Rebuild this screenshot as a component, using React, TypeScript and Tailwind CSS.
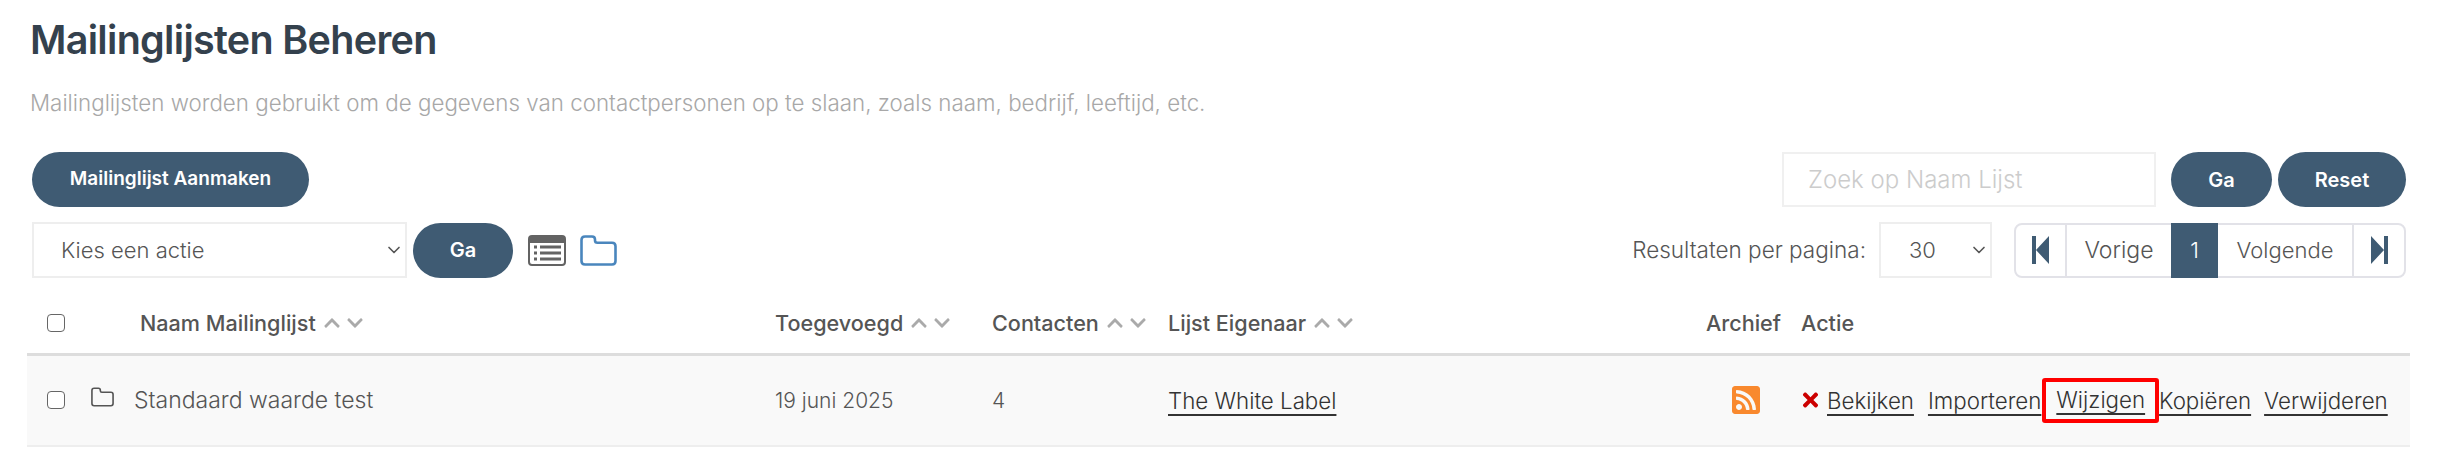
import React from "react";
import { ChevronDown } from "lucide-react";
import { FaChevronDown, FaChevronUp, FaRssSquare, FaTimes } from "react-icons/fa";

const Pill = ({ label, className }: { label: string; className: string }) => (
  <button
    type="button"
    className={`h-[55px] rounded-[28px] bg-[#3f5b73] font-semibold text-white ${className}`}
  >
    {label}
  </button>
);

const Folder = ({ className }: { className: string }) => (
  <svg viewBox="0 0 37 31" fill="none" stroke="currentColor" strokeWidth="2.6" className={className}>
    <path d="M1.5 5C1.5 2.8 2.8 1.5 5 1.5H12C14 1.5 15 2.6 15 4.5V5.5C15 7 16 7.8 17.5 7.8H32C34.2 7.8 35.5 9.2 35.5 11.3V26C35.5 28.2 34.2 29.5 32 29.5H5C2.8 29.5 1.5 28.2 1.5 26Z" />
  </svg>
);

const SortArrows = () => (
  <span className="ml-[7px] inline-flex items-center gap-[5px] text-[#aaaaaa]">
    <FaChevronUp className="h-[18px] w-[18px]" />
    <FaChevronDown className="h-[18px] w-[18px]" />
  </span>
);

const Check = () => (
  <input
    type="checkbox"
    className="block h-[18px] w-[18px] appearance-none rounded-[4px] border-[1.5px] border-[#666666] bg-white"
  />
);

const ActionLink = ({ label, className }: { label: string; className?: string }) => (
  <a href="#" className={`text-[22.3px] text-[#333333] underline decoration-2 underline-offset-[5px] ${className ?? ""}`}>
    {label}
  </a>
);

const SelectBox = ({ label, className, selectClass }: { label: string; className: string; selectClass: string }) => (
  <div className={`relative ${className}`}>
    <select className={`h-[56px] w-full appearance-none border-2 border-[#eeeeee] bg-white text-[22px] text-[#555555] ${selectClass}`}>
      <option>{label}</option>
    </select>
    <ChevronDown className="pointer-events-none absolute top-[18px] right-[3px] h-[20px] w-[20px] text-[#555555]" />
  </div>
);

export default function App() {
  return (
    <div className="h-[462px] w-[2446px] bg-white pl-[27px] pr-[36px] font-['Inter','Liberation_Sans',sans-serif] font-light text-[#555555]">
      <div className="px-[3px]">
        <h1 className="h-[80px] text-[39.5px] leading-[80px] font-semibold tracking-[-0.7px] text-[#34414d]">
          Mailinglijsten Beheren
        </h1>
        <p className="h-[46px] text-[22.35px] leading-[46px] text-[#a8a8a8]">
          Mailinglijsten worden gebruikt om de gegevens van contactpersonen op te slaan, zoals naam, bedrijf, leeftijd, etc.
        </p>
      </div>

      <div className="mt-[26px] flex items-center justify-between pl-[5px] pr-[4px]">
        <Pill label="Mailinglijst Aanmaken" className="w-[277px] text-[19px]" />
        <div className="flex items-center gap-[15px]">
          <input
            placeholder="Zoek op Naam Lijst"
            className="h-[55px] w-[374px] border-2 border-[#f0f0f0] px-[24px] text-[24px] placeholder:text-[#cccccc]"
          />
          <div className="flex gap-[6px]">
            <Pill label="Ga" className="w-[101px] text-[20px]" />
            <Pill label="Reset" className="w-[128px] text-[20px]" />
          </div>
        </div>
      </div>

      <div className="mt-[15px] flex items-center justify-between pl-[5px] pr-[4px]">
        <div className="flex items-center">
          <SelectBox label="Kies een actie" className="w-[375px]" selectClass="pl-[27px]" />
          <Pill label="Ga" className="ml-[6px] w-[100px] text-[20px]" />
          <svg viewBox="0 0 38 31" className="ml-[15px] h-[31px] w-[38px] text-[#636363]" fill="none">
            <rect x="1" y="1" width="36" height="29" rx="3" fill="#ffffff" stroke="currentColor" strokeWidth="2" />
            <path d="M3 1H35C36 1 37 2 37 3V8H1V3C1 2 2 1 3 1Z" fill="currentColor" />
            <path d="M6 12H9M12 12H33M6 18H9M12 18H33M6 24H9M12 24H33" stroke="currentColor" strokeWidth="3" />
          </svg>
          <Folder className="ml-[14px] h-[31px] w-[37px] text-[#4a86bd]" />
        </div>

        <div className="flex items-center">
          <span className="text-[22.5px]">Resultaten per pagina:</span>
          <SelectBox label="30" className="ml-[13px] w-[113px]" selectClass="pl-[28px]" />
          <nav className="ml-[22px] flex h-[55px] items-stretch text-[22px]">
            <span className="flex w-[53px] items-center justify-center rounded-l-[8px] border-2 border-[#e2e2e8]">
              <svg viewBox="0 0 17 28" className="h-[28px] w-[17px] text-[#3f5b73]" fill="currentColor">
                <path d="M0 0H4V28H0ZM17 0V28L4 14Z" />
              </svg>
            </span>
            <span className="flex w-[104px] items-center justify-center border-y-2 border-[#e2e2e8] text-[23px]">Vorige</span>
            <span className="flex w-[47px] items-center justify-center bg-[#3f5b73] text-white">1</span>
            <span className="flex w-[134px] items-center justify-center border-y-2 border-[#e2e2e8]">Volgende</span>
            <span className="flex w-[54px] items-center justify-center rounded-r-[8px] border-2 border-[#e2e2e8]">
              <svg viewBox="0 0 17 28" className="h-[28px] w-[17px] text-[#3f5b73]" fill="currentColor">
                <path d="M0 0V28L13 14ZM13 0H17V28H13Z" />
              </svg>
            </span>
          </nav>
        </div>
      </div>

      <table className="mt-[15px] w-[2383px] table-fixed border-collapse text-left text-[21px]">
        <colgroup>
          <col className="w-[107px]" />
          <col className="w-[641px]" />
          <col className="w-[217px]" />
          <col className="w-[176px]" />
          <col className="w-[535px]" />
          <col className="w-[98px]" />
          <col />
        </colgroup>
        <thead>
          <tr className="h-[61px] border-b-[3px] border-[#dddddd] text-[21.6px]">
            <th className="pl-[20px] font-medium">
              <Check />
            </th>
            <th className="pl-[6px] font-medium">
              <span className="flex items-center">
                Naam Mailinglijst
                <SortArrows />
              </span>
            </th>
            <th className="font-medium">
              <span className="flex items-center">
                Toegevoegd
                <SortArrows />
              </span>
            </th>
            <th className="font-medium">
              <span className="flex items-center">
                Contacten
                <SortArrows />
              </span>
            </th>
            <th className="font-medium">
              <span className="flex items-center">
                Lijst Eigenaar
                <SortArrows />
              </span>
            </th>
            <th className="pr-[20px] text-right font-medium">Archief</th>
            <th className="font-medium">Actie</th>
          </tr>
        </thead>
        <tbody>
          <tr className="h-[92px] border-b-2 border-[#eeeeee] bg-[#f9f9f9]">
            <td className="pl-[20px]">
              <div className="flex items-center gap-[26px]">
                <Check />
                <Folder className="-mt-[6px] h-[20px] w-[23px] text-[#555555]" />
              </div>
            </td>
            <td className="text-[23px]">Standaard waarde test</td>
            <td>19 juni 2025</td>
            <td>4</td>
            <td>
              <ActionLink label="The White Label" />
            </td>
            <td className="pr-[41px] text-right">
              <FaRssSquare className="ml-auto h-[32px] w-[28px] text-[#f9892e]" />
            </td>
            <td>
              <div className="flex items-center whitespace-nowrap">
                <FaTimes className="h-[22px] w-[19px] text-[#cc0000]" />
                <ActionLink label="Bekijken" className="ml-[7px]" />
                <ActionLink label="Importeren" className="ml-[14px]" />
                <span className="ml-px rounded-[3px] border-4 border-[#ff0000] px-[10px] py-px leading-[34px]">
                  <ActionLink label="Wijzigen" />
                </span>
                <ActionLink label="Kopiëren" />
                <ActionLink label="Verwijderen" className="ml-[13px]" />
              </div>
            </td>
          </tr>
        </tbody>
      </table>
    </div>
  );
}
